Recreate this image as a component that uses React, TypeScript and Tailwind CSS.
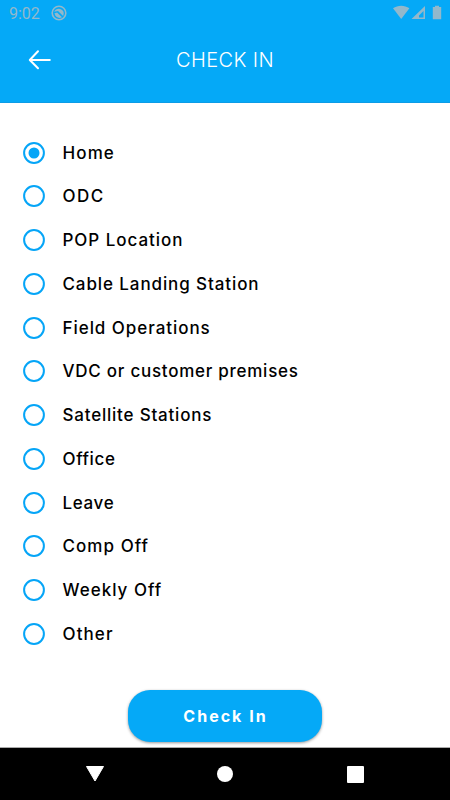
import React from "react";

const options = [
  { label: "Home", spacing: "tracking-[1.1px]" },
  { label: "ODC", spacing: "tracking-[1.5px]" },
  { label: "POP Location", spacing: "tracking-[0.95px]" },
  { label: "Cable Landing Station", spacing: "tracking-[0.9px]" },
  { label: "Field Operations", spacing: "tracking-[0.95px]" },
  { label: "VDC or customer premises", spacing: "tracking-[0.74px]" },
  { label: "Satellite Stations", spacing: "tracking-[0.79px]" },
  { label: "Office", spacing: "tracking-[0.6px]" },
  { label: "Leave", spacing: "tracking-[0.65px]" },
  { label: "Comp Off", spacing: "tracking-[1.05px]" },
  { label: "Weekly Off", spacing: "tracking-[1px]" },
  { label: "Other", spacing: "tracking-[1.1px]" },
];

const StatusBar = () => (
  <div className="flex h-[27px] items-center text-[#92b8cb]">
    <span className="ml-[9px] w-[42px] font-['Roboto',sans-serif] text-[16px] leading-[27px]">
      9:02
    </span>
    <svg className="-mt-px" width="16" height="16" viewBox="0 0 16 16" fill="none">
      <circle cx="8" cy="8" r="6.8" stroke="currentColor" strokeWidth="1.6" />
      <path d="M3.2 6.8C4.6 3 10 2.4 12.3 6.3c.6 1.5.6 3-.2 4.7L7 5.9z" fill="currentColor" />
      <path d="M3.5 8.3l2.6-.9L11 12.2C8 14 4.4 12.3 3.5 8.3z" fill="currentColor" />
    </svg>
    <svg className="-mt-px ml-auto mr-[8px]" width="50" height="16" viewBox="0 0 50 16" fill="currentColor">
      <path d="M1 3.3C5.8-.1 12.6-.1 17.4 3.3L9.2 14z" />
      <path fillRule="evenodd" d="M33 1v13H19.5zM31.5 6v6.5H27V10.5z" />
      <path d="M43 .8h4V2h2.2v12.2h-8.4V2H43z" />
    </svg>
  </div>
);

const Header = () => (
  <div className="grid h-[65px] grid-cols-[1fr_auto_1fr] items-center text-white">
    <svg className="ml-[28px]" width="24" height="22" viewBox="0 0 24 22" fill="none" stroke="currentColor" strokeWidth="2" strokeLinecap="round" strokeLinejoin="round">
      <path d="M10 2.2L1.8 11l8.2 8.2M2.3 11h19.5" />
    </svg>
    <h1 className="font-['Inter',sans-serif] text-[20px] font-light tracking-[0.4px]">CHECK IN</h1>
  </div>
);

const App = () => {
  const [selected, setSelected] = React.useState("Home");

  return (
    <div className="flex h-[800px] w-[450px] flex-col overflow-hidden bg-white font-['Inter',sans-serif]">
      <header className="h-[103px] shrink-0 border-b border-[#0d9ce6] bg-[#05a9f7]">
        <StatusBar />
        <Header />
      </header>

      <div className="mt-[27.8px] flex flex-col pl-[23px]" role="radiogroup">
        {options.map(({ label, spacing }) => (
          <button
            key={label}
            role="radio"
            aria-checked={selected === label}
            onClick={() => setSelected(label)}
            className="flex h-[43.75px] items-center text-left"
          >
            <svg width="22" height="22" viewBox="0 0 22 22" fill="none" className="shrink-0">
              <circle cx="11" cy="11" r="9.9" stroke="#05a5f7" strokeWidth="2" />
              {selected === label && <circle cx="11" cy="11" r="5.5" fill="#05a5f7" />}
            </svg>
            <span className={`ml-[17.5px] whitespace-nowrap text-[17px] font-medium leading-6 text-black ${spacing}`}>
              {label}
            </span>
          </button>
        ))}
      </div>

      <button className="mx-auto mt-[34px] h-[52px] w-[194px] shrink-0 rounded-[22px] bg-[#05a9f7] pl-px text-[16px] font-bold tracking-[2px] text-white shadow-[0_1px_3px_rgba(0,0,0,0.4)]">
        Check In
      </button>

      <nav className="mt-auto grid h-[53px] shrink-0 grid-cols-3 items-center border-t border-[#aaa] bg-black px-[30px]">
        <svg className="mx-auto -mt-px" width="20" height="18" viewBox="0 0 20 18">
          <path d="M1.5 1.5h17L10 16z" fill="white" stroke="white" strokeLinejoin="round" />
        </svg>
        <span className="mx-auto h-4 w-4 rounded-full bg-white" />
        <span className="mx-auto h-[17px] w-[17px] rounded-[1px] bg-white" />
      </nav>
    </div>
  );
};

export default App;
